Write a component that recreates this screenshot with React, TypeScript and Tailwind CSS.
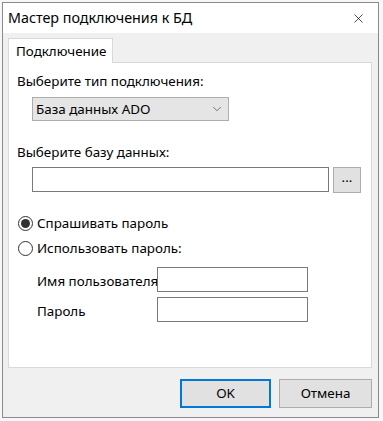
import { ChevronDown, X } from 'lucide-react';

const font = { fontFamily: '"Noto Sans", "Open Sans", sans-serif' };

const Radio = ({ checked, label }: { checked: boolean; label: string }) => (
  <div className="flex items-center h-[20px]">
    <span className="w-[15px] h-[15px] rounded-full border border-[#333] bg-white flex items-center justify-center ml-[1px]">
      {checked && <span className="w-[9px] h-[9px] rounded-full bg-[#333]" />}
    </span>
    <span className="ml-[4px]">{label}</span>
  </div>
);

const Field = ({ label }: { label: string }) => (
  <div className="flex items-center h-[25px] pl-[20px]">
    <span className="w-[120px] pt-[3px] whitespace-nowrap">{label}</span>
    <div className="w-[151px] h-[25px] border border-[#7a7a7a] bg-white" />
  </div>
);

export default function App() {
  return (
    <div className="w-[383px] h-[421px] bg-[#f7f7f7] pt-[2px] pl-[2px] overflow-hidden" style={font}>
      <div className="w-[377px] h-[416px] border border-[#8a8a8a] bg-[#f0f0f0] flex flex-col text-[13.4px] text-black">
        <div className="h-[30px] bg-white flex items-center justify-between pl-[5px] pr-[12px] shrink-0">
          <span className="text-[14.3px]">Мастер подключения к БД</span>
          <X size={15} strokeWidth={1.2} className="text-[#111]" />
        </div>

        <div className="px-[5px] pt-[5px]">
          <div className="relative z-10 -mb-px w-[105px] h-[25px] bg-white border border-b-0 border-[#d9d9d9] pl-[7px] flex items-center">
            Подключение
          </div>
          <div className="w-[364px] h-[306px] bg-white border border-[#d9d9d9] pl-[8px] pt-[8px]">
            <div className="h-[20px] flex items-center">Выберите тип подключения:</div>
            <div className="ml-[15px] mt-[6px] w-[197px] h-[24px] bg-[#e5e5e5] border border-[#adadad] flex items-center justify-between pl-[3px] pr-[4px]">
              <span>База данных ADO</span>
              <ChevronDown size={14} strokeWidth={1.2} className="text-[#444]" />
            </div>
            <div className="mt-[21px] h-[20px] flex items-center">Выберите базу данных:</div>
            <div className="ml-[15px] mt-[5px] flex gap-[4px]">
              <div className="w-[297px] h-[25px] border border-[#7a7a7a] bg-white" />
              <div className="w-[28px] h-[26px] border border-[#adadad] bg-[#e1e1e1] flex items-center justify-center leading-none pb-[4px]">
                ...
              </div>
            </div>
            <div className="mt-[20px]">
              <Radio checked label="Спрашивать пароль" />
            </div>
            <div className="mt-[5px]">
              <Radio checked={false} label="Использовать пароль:" />
            </div>
            <div className="mt-[9px] flex flex-col gap-[5px]">
              <Field label="Имя пользователя" />
              <Field label="Пароль" />
            </div>
          </div>
        </div>

        <div className="flex justify-end gap-[8px] pr-[6px] mt-[11px]">
          <button className="w-[91px] h-[29px] border-2 border-[#0078d7] bg-[#e1e1e1]">OK</button>
          <button className="w-[93px] h-[29px] border border-[#adadad] bg-[#e1e1e1]">Отмена</button>
        </div>
      </div>
    </div>
  );
}
